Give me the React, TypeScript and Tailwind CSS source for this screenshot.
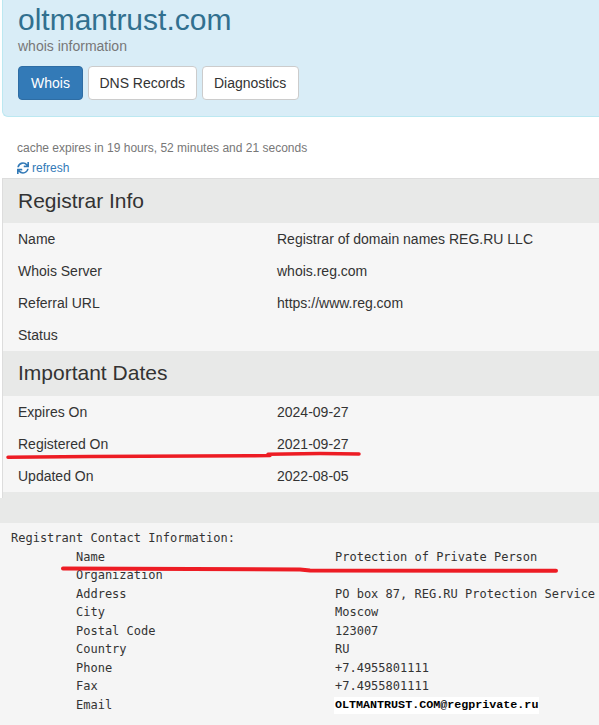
import { FaSync } from "react-icons/fa";

const registrar: [string, string][] = [
  ["Name", "Registrar of domain names REG.RU LLC"],
  ["Whois Server", "whois.reg.com"],
  ["Referral URL", "https://www.reg.com"],
  ["Status", ""],
];

const dates: [string, string][] = [
  ["Expires On", "2024-09-27"],
  ["Registered On", "2021-09-27"],
  ["Updated On", "2022-08-05"],
];

const contact: [string, string][] = [
  ["Name", "Protection of Private Person"],
  ["Organization", ""],
  ["Address", "PO box 87, REG.RU Protection Service"],
  ["City", "Moscow"],
  ["Postal Code", "123007"],
  ["Country", "RU"],
  ["Phone", "+7.4955801111"],
  ["Fax", "+7.4955801111"],
];

function SectionHeader({ title, tall }: { title: string; tall?: boolean }) {
  return (
    <div
      className={
        tall
          ? "px-[15px] pt-[10px] pb-[11px] text-[21px] leading-[24px] text-[#333]"
          : "px-[15px] pt-[10px] pb-[10px] text-[21px] leading-[24px] text-[#333]"
      }
    >
      {title}
    </div>
  );
}

function InfoRows({ rows }: { rows: [string, string][] }) {
  return (
    <div className="bg-[#f6f6f6]">
      {rows.map(([label, value]) => (
        <div
          key={label}
          className="grid grid-cols-[259px_1fr] px-[15px] py-[6px] text-[14px] leading-[20px] text-[#333]"
        >
          <span>{label}</span>
          <span>{value}</span>
        </div>
      ))}
    </div>
  );
}

export default function App() {
  return (
    <div className="relative w-[599px] h-[725px] overflow-hidden bg-white font-['Liberation_Sans',Arial,sans-serif] text-[#333]">
      {/* page header */}
      <div className="ml-[2px] rounded-bl-[6px] border-l border-b border-[#bce8f1] bg-[#d9edf7] pl-[15px] pt-[3px] pb-[16px]">
        <h1 className="text-[30px] leading-[33px] text-[#31708f]">oltmantrust.com</h1>
        <p className="text-[14px] leading-[20px] text-[#777]">whois information</p>
        <div className="mt-[10px] flex gap-[5px]">
          <span className="rounded-[4px] border border-[#2e6da4] bg-[#337ab7] px-[12px] py-[6px] text-[14px] leading-[20px] text-white">
            Whois
          </span>
          <span className="rounded-[4px] border border-[#ccc] bg-white px-[10.5px] py-[6px] text-[14px] leading-[20px] text-[#333]">
            DNS Records
          </span>
          <span className="rounded-[4px] border border-[#ccc] bg-white px-[11.5px] py-[6px] text-[14px] leading-[20px] text-[#333]">
            Diagnostics
          </span>
        </div>
      </div>

      {/* cache notice */}
      <div className="mt-[21px] ml-[17px] text-[12px] leading-[20px]">
        <div className="text-[#777]">cache expires in 19 hours, 52 minutes and 21 seconds</div>
        <div className="flex items-center gap-[3px] text-[#337ab7]">
          <FaSync className="h-[12px] w-[12px]" />
          <span>refresh</span>
        </div>
      </div>

      {/* parsed whois panel */}
      <div className="ml-[2px] border-l border-t border-[#dddddd] bg-[#e8e9e8] pb-[6px]">
        <SectionHeader title="Registrar Info" />
        <InfoRows rows={registrar} />
        <SectionHeader title="Important Dates" tall />
        <InfoRows rows={dates} />
      </div>
      <div className="h-[25px] bg-[#e8e9e8]" />

      {/* raw whois text */}
      <div className="h-[210px] bg-[#f5f5f5] pl-[11px] pt-[6px] font-['DejaVu_Sans_Mono',monospace] text-[12px] leading-[18.55px] text-[#333] whitespace-pre">
        <div>Registrant Contact Information:</div>
        {contact.map(([label, value]) => (
          <div key={label} className="flex">
            <span className="w-[324px] shrink-0 pl-[65px]">{label}</span>
            <span>{value}</span>
          </div>
        ))}
        <div className="flex items-center">
          <span className="w-[324px] shrink-0 pl-[65px]">Email</span>
          <span className="-ml-[1px] bg-white px-[1px] font-['Liberation_Mono',monospace] text-[11.7px] font-bold leading-[17px] text-black">
            OLTMANTRUST.COM@regprivate.ru
          </span>
        </div>
      </div>

      {/* hand-drawn red marks */}
      <svg
        className="pointer-events-none absolute left-0 top-0"
        width="599"
        height="725"
        viewBox="0 0 599 725"
        fill="none"
      >
        <path
          d="M8 457.2 L90 456.4 L250 455.8 L270 455.4 M268 454.3 L320 453.6 L359 453.9"
          stroke="#ed1c24"
          strokeWidth="3.5"
          strokeLinecap="round"
          strokeLinejoin="round"
        />
        <path
          d="M63 568.4 L300 569.4 L310 570.4 L556 570.8"
          stroke="#ed1c24"
          strokeWidth="4"
          strokeLinecap="round"
          strokeLinejoin="round"
        />
      </svg>
    </div>
  );
}
